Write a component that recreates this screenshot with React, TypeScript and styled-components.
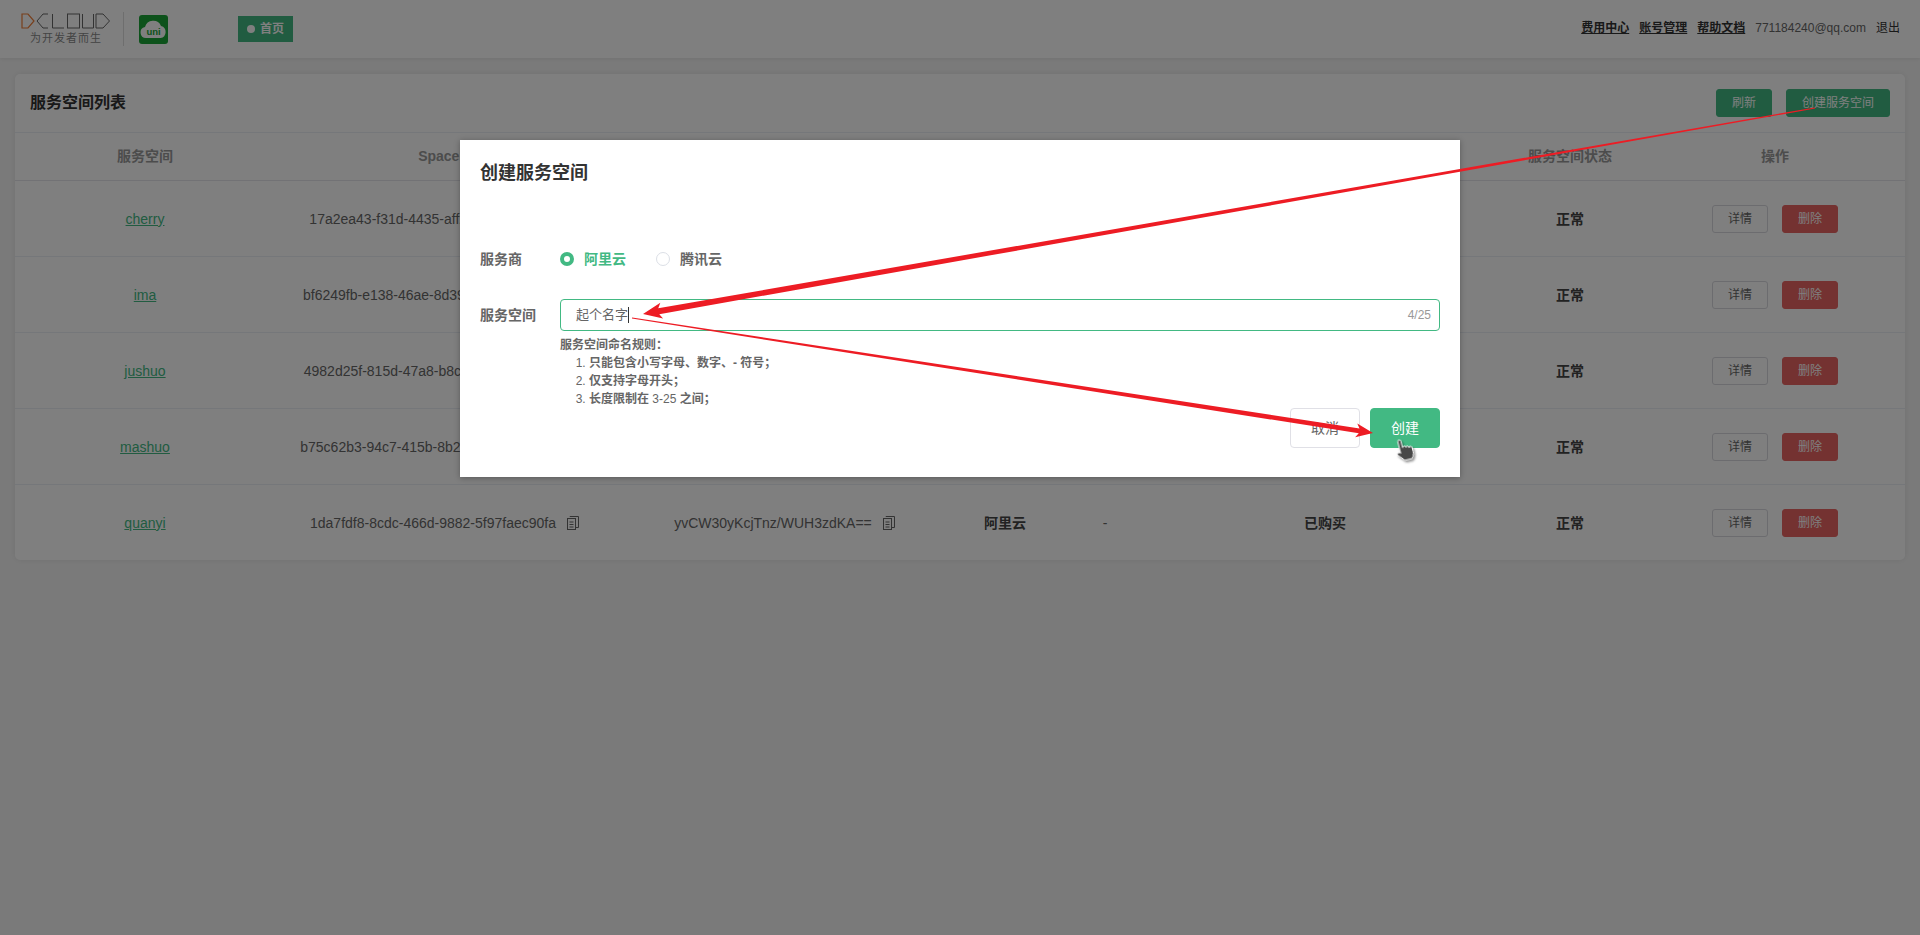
import styled, { createGlobalStyle } from 'styled-components';

const GlobalStyle = createGlobalStyle`
  html, body {
    margin: 0;
    height: 100%;
    overflow: hidden;
    background: #f5f5f5;
    font-family: "Liberation Sans", "Noto Sans CJK SC", sans-serif;
    color: #666;
  }
`;

const GREEN = '#42b983';

const Page = styled.div`
  position: relative;
  width: 1920px;
  height: 935px;
  overflow: hidden;
`;

const TopBar = styled.header`
  height: 58px;
  display: flex;
  align-items: center;
  background: #fff;
  padding: 0 20px 0 21px;
  box-shadow: 0 1px 4px rgba(0, 0, 0, 0.08);
`;

const Brand = styled.div`
  width: 102px;
  display: flex;
  flex-direction: column;
`;

const Slogan = styled.span`
  margin: 2px 0 0 9px;
  font-size: 11px;
  line-height: 14px;
  letter-spacing: 1px;
  color: #888;
  white-space: nowrap;
`;

const Divider = styled.div`
  width: 1px;
  height: 34px;
  background: #ddd;
`;

const UniIcon = styled.svg`
  margin-left: 15px;
  width: 29px;
  height: 29px;
`;

const HomeTab = styled.div`
  margin-left: 70px;
  width: 55px;
  height: 26px;
  display: flex;
  align-items: center;
  justify-content: center;
  gap: 5px;
  background: ${GREEN};
  color: #fff;
  font-size: 12px;
  line-height: 16px;
  font-weight: 700;
`;

const Dot = styled.i`
  width: 8px;
  height: 8px;
  border-radius: 50%;
  background: #fff;
`;

const TopLinks = styled.nav`
  margin-left: auto;
  margin-bottom: 2px;
  display: flex;
  align-items: center;
  gap: 10px;
  font-size: 12px;
  line-height: 16px;
  color: #333;
`;

const TopLink = styled.a`
  font-weight: 700;
  text-decoration: underline;
  color: #333;
`;

const Email = styled.span`
  color: #666;
`;

const Card = styled.section`
  margin: 16px 15px 0;
  background: #fff;
  border-radius: 5px;
  box-shadow: 0 0 6px rgba(0, 0, 0, 0.08);
`;

const CardHead = styled.div`
  height: 58px;
  padding: 0 15px;
  display: flex;
  align-items: center;
  justify-content: space-between;
`;

const CardTitle = styled.h2`
  margin: 0;
  font-size: 16px;
  line-height: 20px;
  font-weight: 700;
  color: #333;
`;

const Actions = styled.div`
  display: flex;
  gap: 14px;
`;

const Button = styled.button<{ $kind: 'primary' | 'default' | 'danger'; $wide?: boolean }>`
  height: 28px;
  width: ${({ $wide }) => ($wide ? '104px' : '56px')};
  padding: 0;
  font: inherit;
  font-size: 12px;
  line-height: 16px;
  border-radius: 3px;
  border: 1px solid
    ${({ $kind }) =>
      $kind === 'primary' ? GREEN : $kind === 'danger' ? '#e86462' : '#d8d8de'};
  background: ${({ $kind }) =>
    $kind === 'primary' ? GREEN : $kind === 'danger' ? '#e86462' : '#fff'};
  color: ${({ $kind }) => ($kind === 'default' ? '#666' : '#fff')};
`;

const Table = styled.table`
  width: 100%;
  table-layout: fixed;
  border-collapse: collapse;
  font-size: 14px;
  line-height: 18px;
`;

const Th = styled.th`
  height: 45px;
  padding: 0 0 2px;
  border-top: 1px solid #ebeef5;
  border-bottom: 1px solid #e4e4ea;
  font-size: 14px;
  font-weight: 700;
  color: #999;
  text-align: center;
`;

const Td = styled.td<{ $bold?: boolean }>`
  height: 75px;
  padding: 0;
  border-bottom: 1px solid #ebeef5;
  text-align: center;
  color: ${({ $bold }) => ($bold ? '#444' : '#666')};
  font-weight: ${({ $bold }) => ($bold ? 700 : 400)};
  white-space: nowrap;

  tr:last-child > & {
    border-bottom: 0;
  }
`;

const NameLink = styled.a`
  color: ${GREEN};
  text-decoration: underline;
`;

const CopyWrap = styled.span`
  display: inline-flex;
  align-items: center;
  gap: 10px;
`;

const RowButtons = styled.div`
  display: flex;
  justify-content: center;
  gap: 14px;
`;

const Mask = styled.div`
  position: absolute;
  inset: 0;
  background: rgba(0, 0, 0, 0.5);
  display: flex;
  justify-content: center;
  align-items: flex-start;
  padding-top: 140px;
`;

const Dialog = styled.div`
  width: 1000px;
  box-sizing: border-box;
  height: 337px;
  padding: 21px 20px 20px;
  background: #fff;
  box-shadow: 0 1px 6px rgba(0, 0, 0, 0.3);
`;

const DialogTitle = styled.h3`
  margin: 0 0 64px;
  font-size: 18px;
  line-height: 24px;
  font-weight: 700;
  color: #333;
`;

const FormRow = styled.div<{ $gap?: number }>`
  display: flex;
  margin-top: ${({ $gap }) => $gap ?? 0}px;
`;

const FormLabel = styled.label<{ $line: number }>`
  width: 80px;
  flex: none;
  font-size: 14px;
  font-weight: 700;
  line-height: ${({ $line }) => $line}px;
  color: #666;
`;

const RadioGroup = styled.div`
  display: flex;
  gap: 30px;
`;

const RadioItem = styled.span<{ $on?: boolean }>`
  display: flex;
  align-items: center;
  gap: 10px;
  font-size: 14px;
  line-height: 20px;
  font-weight: 700;
  color: ${({ $on }) => ($on ? GREEN : '#666')};
`;

const RadioDot = styled.i<{ $on?: boolean }>`
  width: 14px;
  height: 14px;
  box-sizing: border-box;
  border-radius: 50%;
  border: ${({ $on }) => ($on ? `4px solid ${GREEN}` : '1px solid #dcdfe6')};
  background: #fff;
`;

const FieldColumn = styled.div`
  flex: 1;
`;

const InputBox = styled.div`
  height: 32px;
  box-sizing: border-box;
  padding: 0 8px 0 15px;
  display: flex;
  align-items: center;
  justify-content: space-between;
  border: 1px solid ${GREEN};
  border-radius: 4px;
  font-size: 13px;
  line-height: 18px;
  color: #666;
`;

const InputValue = styled.span`
  display: flex;
  align-items: center;
`;

const Caret = styled.i`
  width: 1px;
  height: 16px;
  background: #333;
`;

const Counter = styled.span`
  font-size: 12px;
  color: #999;
`;

const Rules = styled.div`
  margin-top: 5px;
  font-size: 12px;
  line-height: 18px;
  color: #666;
  font-weight: 700;
`;

const RuleList = styled.ol`
  margin: 0;
  padding-left: 29px;

  li::marker {
    font-weight: 400;
  }
`;

const RuleNumber = styled.span`
  font-weight: 400;
`;

const DialogFooter = styled.div`
  display: flex;
  justify-content: flex-end;
  gap: 10px;
`;

const DialogButton = styled.button<{ $primary?: boolean }>`
  width: 70px;
  height: 40px;
  padding: 0;
  font: inherit;
  font-size: 14px;
  line-height: 18px;
  border-radius: 4px;
  border: 1px solid ${({ $primary }) => ($primary ? GREEN : '#e0e0e6')};
  background: ${({ $primary }) => ($primary ? GREEN : '#fff')};
  color: ${({ $primary }) => ($primary ? '#fff' : '#666')};
`;

const Annotations = styled.svg`
  position: absolute;
  inset: 0;
  pointer-events: none;
`;

const rows = [
  { name: 'cherry', id: '17a2ea43-f31d-4435-aff2-9c1e7dfb60fa', secret: 'aQ7mW2xKcLnz/PRT8vdYA==' },
  { name: 'ima', id: 'bf6249fb-e138-46ae-8d39-4e082a7861bd', secret: 'tH3sZ9yNkVbq/LEM5gdQA==' },
  { name: 'jushuo', id: '4982d25f-815d-47a8-b8c4-07fe3d19a6c2', secret: 'pX6rJ1wFcTnh/QUD4zkGA==' },
  { name: 'mashuo', id: 'b75c62b3-94c7-415b-8b27-d1a06e58c309', secret: 'kB8uV4yMsGjz/HOA2tdRA==' },
  { name: 'quanyi', id: '1da7fdf8-8cdc-466d-9882-5f97faec90fa', secret: 'yvCW30yKcjTnz/WUH3zdKA==' },
];

type Pt = [number, number];

// tapered stroke with a barbed head, the way the screenshot tool draws it
function arrowPoints(from: Pt, to: Pt, headLen: number, headHalf: number, neckHalf: number) {
  const dx = to[0] - from[0];
  const dy = to[1] - from[1];
  const len = Math.hypot(dx, dy);
  const ux = dx / len;
  const uy = dy / len;
  const nx = -uy;
  const ny = ux;
  const nk: Pt = [to[0] - ux * headLen, to[1] - uy * headLen];
  const back: Pt = [to[0] - ux * (headLen + 3), to[1] - uy * (headLen + 3)];
  const pts: Pt[] = [
    [from[0] + nx * 0.6, from[1] + ny * 0.6],
    [nk[0] + nx * neckHalf, nk[1] + ny * neckHalf],
    [back[0] + nx * headHalf, back[1] + ny * headHalf],
    to,
    [back[0] - nx * headHalf, back[1] - ny * headHalf],
    [nk[0] - nx * neckHalf, nk[1] - ny * neckHalf],
    [from[0] - nx * 0.6, from[1] - ny * 0.6],
  ];
  return pts.map((p) => p.join(',')).join(' ');
}

function CopyIcon() {
  return (
    <svg width="14" height="14" viewBox="0 0 14 14" fill="none" stroke="#666" strokeWidth="1">
      <rect x="1.5" y="2.5" width="8" height="11" />
      <path d="M4 1V.5h8.5v11H10M3.5 6h4M3.5 8.5h4M3.5 11h4" />
    </svg>
  );
}

function DcloudLogo() {
  return (
    <svg width="90" height="16" viewBox="0 0 90 16" fill="none" stroke="#666" strokeWidth="1">
      <path d="M1 1h6l6 7-6 7H1z" stroke="#f07f38" strokeWidth="1.2" />
      <path d="M27 1H22l-6 7 6 7h5" />
      <path d="M31.5 1v14H43" />
      <rect x="46.5" y="1" width="12" height="14" />
      <path d="M61.5 1v14H72.5V1" />
      <path d="M75 1h7l6.500 7-6.500 7h-7z" />
    </svg>
  );
}

function UniLogo() {
  return (
    <UniIcon viewBox="0 0 29 29">
      <rect width="29" height="29" rx="3" fill="#1aa536" />
      <path
        d="M7 23a5.500 5.500 0 0 1-1-10.900 8.500 8.500 0 0 1 16-1.200A6.200 6.200 0 0 1 21.500 23z"
        fill="#fff"
      />
      <text x="14.500" y="20" textAnchor="middle" fontSize="9.500" fontWeight="700" fill="#1aa536">
        uni
      </text>
    </UniIcon>
  );
}

export default function App() {
  return (
    <Page>
      <GlobalStyle />
      <TopBar>
        <Brand>
          <DcloudLogo />
          <Slogan>为开发者而生</Slogan>
        </Brand>
        <Divider />
        <UniLogo />
        <HomeTab>
          <Dot />
          首页
        </HomeTab>
        <TopLinks>
          <TopLink>费用中心</TopLink>
          <TopLink>账号管理</TopLink>
          <TopLink>帮助文档</TopLink>
          <Email>771184240@qq.com</Email>
          <span>退出</span>
        </TopLinks>
      </TopBar>

      <Card>
        <CardHead>
          <CardTitle>服务空间列表</CardTitle>
          <Actions>
            <Button $kind="primary">刷新</Button>
            <Button $kind="primary" $wide>
              创建服务空间
            </Button>
          </Actions>
        </CardHead>
        <Table>
          <colgroup>
            <col width="260" />
            <col width="340" />
            <col width="340" />
            <col width="100" />
            <col width="100" />
            <col width="340" />
            <col width="150" />
            <col width="260" />
          </colgroup>
          <thead>
            <tr>
              <Th>服务空间</Th>
              <Th>SpaceId</Th>
              <Th>ClientSecret</Th>
              <Th>服务商</Th>
              <Th>备注</Th>
              <Th>套餐</Th>
              <Th>服务空间状态</Th>
              <Th>操作</Th>
            </tr>
          </thead>
          <tbody>
            {rows.map((row) => (
              <tr key={row.name}>
                <Td>
                  <NameLink>{row.name}</NameLink>
                </Td>
                <Td>
                  <CopyWrap>
                    {row.id}
                    <CopyIcon />
                  </CopyWrap>
                </Td>
                <Td>
                  <CopyWrap>
                    {row.secret}
                    <CopyIcon />
                  </CopyWrap>
                </Td>
                <Td $bold>阿里云</Td>
                <Td>-</Td>
                <Td $bold>已购买</Td>
                <Td $bold>正常</Td>
                <Td>
                  <RowButtons>
                    <Button $kind="default">详情</Button>
                    <Button $kind="danger">删除</Button>
                  </RowButtons>
                </Td>
              </tr>
            ))}
          </tbody>
        </Table>
      </Card>

      <Mask>
        <Dialog>
          <DialogTitle>创建服务空间</DialogTitle>
          <FormRow>
            <FormLabel $line={20}>服务商</FormLabel>
            <RadioGroup>
              <RadioItem $on>
                <RadioDot $on />
                阿里云
              </RadioItem>
              <RadioItem>
                <RadioDot />
                腾讯云
              </RadioItem>
            </RadioGroup>
          </FormRow>
          <FormRow $gap={30}>
            <FormLabel $line={32}>服务空间</FormLabel>
            <FieldColumn>
              <InputBox>
                <InputValue>
                  起个名字
                  <Caret />
                </InputValue>
                <Counter>4/25</Counter>
              </InputBox>
              <Rules>
                服务空间命名规则：
                <RuleList>
                  <li>只能包含小写字母、数字、- 符号；</li>
                  <li>仅支持字母开头；</li>
                  <li>
                    长度限制在 <RuleNumber>3-25</RuleNumber> 之间；
                  </li>
                </RuleList>
              </Rules>
            </FieldColumn>
          </FormRow>
          <DialogFooter>
            <DialogButton>取消</DialogButton>
            <DialogButton $primary>创建</DialogButton>
          </DialogFooter>
        </Dialog>
      </Mask>

      <Annotations width="1920" height="935" viewBox="0 0 1920 935">
        <polygon points={arrowPoints([1815, 108], [643, 314], 16, 8, 3)} fill="#ed1c24" />
        <polygon points={arrowPoints([632, 318], [1373, 433], 14, 7, 2.5)} fill="#ed1c24" />
        <g transform="translate(1395 438) rotate(-14 10 12)">
          <path
            d="M5 2.500a1.600 1.600 0 0 1 3.200 0V9h.6a1.500 1.500 0 0 1 2.900.2v.5a1.500 1.500 0 0 1 2.900.3v.7a1.500 1.500 0 0 1 2.900.4V15.500c0 3-1.500 5-2.500 6.500H7.500L2 15.500c-1.200-1.500.6-3.200 2-2.200l1 1z"
            fill="#484848"
            stroke="#fff"
            strokeWidth="1"
            style={{ filter: 'drop-shadow(1px 2px 1px rgba(0,0,0,.45))' }}
          />
        </g>
      </Annotations>
    </Page>
  );
}
